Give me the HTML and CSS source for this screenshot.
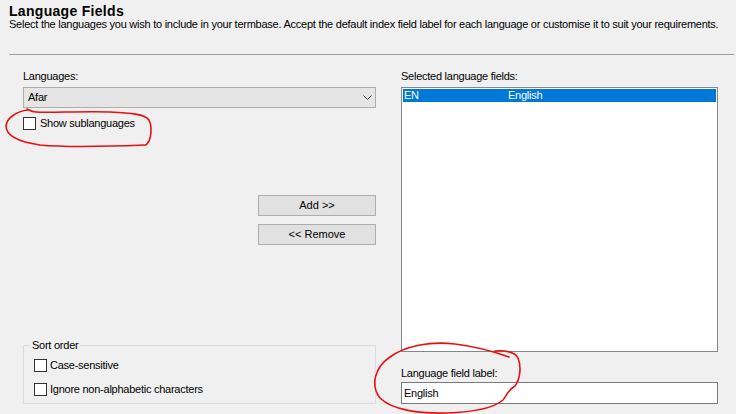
FILE: index.html
```html
<!DOCTYPE html>
<html lang="en">
<head>
    <meta charset="UTF-8">
    <title>Language Fields</title>
    <link rel="stylesheet" href="styles.css">
</head>
<body>
    <div class="wizard">
        <header class="page-head">
            <h1>Language Fields</h1>
            <p>Select the languages you wish to include in your termbase. Accept the default index field label for each language or customise it to suit your requirements.</p>
        </header>
        <div class="rule"></div>

        <main class="fields">
            <section class="col-left">
                <div class="caption">Languages:</div>
                <div class="combo">
                    <span>Afar</span>
                    <svg width="9" height="5" viewBox="0 0 9 5"><polyline points="0.5,0.5 4.5,4.5 8.5,0.5" fill="none" stroke="#444" stroke-width="1"/></svg>
                </div>
                <label class="check"><span class="box"></span>Show sublanguages</label>

                <div class="actions">
                    <button type="button">Add &gt;&gt;</button>
                    <button type="button">&lt;&lt; Remove</button>
                </div>

                <fieldset class="sort">
                    <legend>Sort order</legend>
                    <label class="check"><span class="box"></span>Case-sensitive</label>
                    <label class="check"><span class="box"></span>Ignore non-alphabetic characters</label>
                </fieldset>
            </section>

            <section class="col-right">
                <div class="caption">Selected language fields:</div>
                <div class="listbox">
                    <div class="row selected"><span class="code">EN</span><span>English</span></div>
                </div>
                <div class="caption label-gap">Language field label:</div>
                <div class="textbox">English</div>
            </section>
        </main>

        <!-- red pen marks drawn over the dialog -->
        <svg class="marks" width="736" height="414" viewBox="0 0 736 414">
            <path d="M28,110 C18,111 7,117 6,126 C6,136 20,142 40,145 C70,148 120,146 146,145 C152,140 152,126 149,120 C145,114 130,113 110,112 C80,111 50,113 36,112 C32,112 29,110 27,109"/>
            <path d="M509,357 C495,352 480,347 455,344 C430,341 405,346 390,357 C375,367 370,385 380,398 C392,410 420,414 447,413 C475,412 495,407 503,400 C507,395 508,390 515,386 C521,378 521,365 518,358 C515,352 505,350 495,351"/>
        </svg>
    </div>
</body>
</html>
```

FILE: styles.css
```css
body {
    margin: 0;
    background: #f0f0f0;
    font: 11px/13px "Liberation Sans", Arial, sans-serif;
    letter-spacing: -0.25px;
    color: #000;
}
.wizard {
    position: relative;
    width: 736px;
    height: 414px;
    overflow: hidden;
}
.page-head {
    padding: 4px 0 0 9px;
    white-space: nowrap;
}
.page-head h1 {
    margin: 0;
    font-size: 14px;
    line-height: 14px;
    font-weight: bold;
    letter-spacing: 0.3px;
}
.page-head p {
    margin: 0;
}
.rule {
    margin: 23px 2px 0 9px;
    border-top: 1px solid #a0a0a0;
}
.fields {
    display: grid;
    grid-template-columns: 353px 317px;
    column-gap: 25px;
    padding: 15px 0 0 23px;
    height: 334px;
}
.col-left, .col-right {
    display: flex;
    flex-direction: column;
}
.combo {
    margin-top: 4px;
    height: 21px;
    box-sizing: border-box;
    border: 1px solid #adadad;
    background: #e5e5e5;
    display: flex;
    align-items: center;
    justify-content: space-between;
    padding: 0 3px 0 4px;
}
.check {
    display: flex;
    align-items: center;
    gap: 4px;
    height: 13px;
}
.box {
    width: 13px;
    height: 13px;
    box-sizing: border-box;
    border: 1px solid #333;
    background: #fff;
}
.col-left > .check {
    margin-top: 9px;
}
.actions {
    margin-top: 65px;
    display: flex;
    flex-direction: column;
    align-items: flex-end;
    gap: 8px;
}
button {
    width: 118px;
    height: 21px;
    padding: 0;
    border: 1px solid #adadad;
    background: #e1e1e1;
    font: inherit;
    color: #000;
}
.sort {
    margin: auto 0 0 0;
    border: 1px solid #dcdcdc;
    padding: 7px 9px 7px 10px;
    display: flex;
    flex-direction: column;
    gap: 11px;
}
.sort legend {
    padding: 0 2px;
    margin-left: -4px;
}
.sort .check {
    gap: 3px;
}
.listbox {
    margin-top: 4px;
    height: 265px;
    box-sizing: border-box;
    border: 1px solid #828790;
    background: #fff;
    padding: 1px;
}
.row.selected {
    display: flex;
    height: 13px;
    padding-left: 1px;
    background: #0078d7;
    color: #fff;
}
.code {
    width: 104px;
}
.label-gap {
    margin-top: 15px;
}
.textbox {
    margin-top: 2px;
    height: 22px;
    box-sizing: border-box;
    border: 1px solid #7a7a7a;
    background: #fff;
    padding: 0 2px;
    display: flex;
    align-items: center;
}
.marks {
    position: absolute;
    top: 0;
    left: 0;
    pointer-events: none;
}
.marks path {
    fill: none;
    stroke: #e81010;
    stroke-width: 1.6;
    stroke-linecap: round;
}
```
